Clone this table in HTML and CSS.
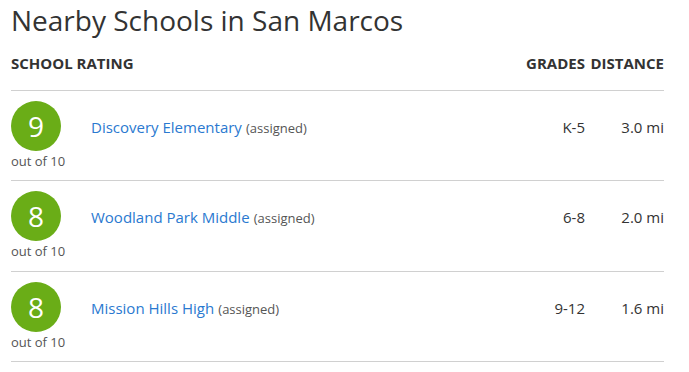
FILE: index.html
```html
<!DOCTYPE html>
<html>
<head>
<meta charset="utf-8">
<link rel="stylesheet" href="styles.css">
</head>
<body>
<div class="wrap">
  <h1 class="title">Nearby Schools in San Marcos</h1>
  <div class="table">
    <div class="row head">
      <div class="c-rating">SCHOOL RATING</div>
      <div class="c-name"></div>
      <div class="c-grades">GRADES</div>
      <div class="c-dist">DISTANCE</div>
    </div>
    <div class="row">
      <div class="c-rating">
        <div class="badge">9</div>
        <div class="outof">out of 10</div>
      </div>
      <div class="c-name"><a class="link">Discovery Elementary</a> <span class="note">(assigned)</span></div>
      <div class="c-grades">K-5</div>
      <div class="c-dist">3.0 mi</div>
    </div>
    <div class="row">
      <div class="c-rating">
        <div class="badge">8</div>
        <div class="outof">out of 10</div>
      </div>
      <div class="c-name"><a class="link">Woodland Park Middle</a> <span class="note">(assigned)</span></div>
      <div class="c-grades">6-8</div>
      <div class="c-dist">2.0 mi</div>
    </div>
    <div class="row">
      <div class="c-rating">
        <div class="badge">8</div>
        <div class="outof">out of 10</div>
      </div>
      <div class="c-name"><a class="link">Mission Hills High</a> <span class="note">(assigned)</span></div>
      <div class="c-grades">9-12</div>
      <div class="c-dist">1.6 mi</div>
    </div>
  </div>
</div>
</body>
</html>
```
FILE: styles.css
```css
html, body {
  margin: 0;
  padding: 0;
  background: #fff;
}
body {
  font-family: "Open Sans", "Liberation Sans", sans-serif;
  color: #333;
}
.wrap {
  padding: 0 25px 0 11px;
}
.title {
  margin: 0;
  font-size: 28px;
  font-weight: 400;
  line-height: 40px;
  color: #333;
}
.table {
  margin-top: 10px;
}
.row {
  display: grid;
  grid-template-columns: 80px 1fr 59px 79px;
  border-bottom: 1px solid #d0d0d0;
}
.row.head {
  box-sizing: border-box;
  height: 41px;
  padding-top: 3px;
  font-size: 15px;
  font-weight: 700;
  line-height: 20px;
  color: #333;
  white-space: nowrap;
}
.row:not(.head) {
  height: 90.34px;
  box-sizing: border-box;
  padding-top: 10px;
}
.c-grades, .c-dist {
  text-align: right;
  font-size: 15px;
}
.c-rating {
  display: flex;
  flex-direction: column;
  align-items: flex-start;
}
.row:not(.head) .c-name,
.row:not(.head) .c-grades,
.row:not(.head) .c-dist {
  margin-top: 14px;
  line-height: 24px;
}
.badge {
  width: 50px;
  height: 50px;
  border-radius: 50%;
  background: #6aad17;
  color: #fff;
  font-size: 28px;
  line-height: 50px;
  text-align: center;
}
.outof {
  margin-top: 1px;
  font-size: 13px;
  line-height: 18px;
  color: #555;
  white-space: nowrap;
}
.link {
  color: #2a79d0;
  font-size: 15px;
  text-decoration: none;
}
.note {
  font-size: 13px;
  color: #555;
}
```
